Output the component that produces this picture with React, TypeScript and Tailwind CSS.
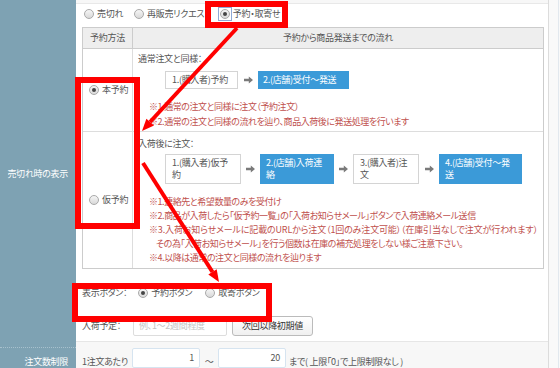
import React from 'react';

// small radio glyph, like the browser default one in the shot
const Radio = ({ checked = false, focus = false }: { checked?: boolean; focus?: boolean }) => (
  <span
    className={
      focus
        ? 'inline-flex items-center justify-center w-[12px] h-[12px] outline outline-1 outline-[#8fa9d6]'
        : 'inline-flex items-center justify-center w-[12px] h-[12px]'
    }
  >
    <span className="flex items-center justify-center w-[10px] h-[10px] rounded-full border border-[#a9a9a9] bg-gradient-to-b from-[#f6f6f6] to-[#d9d9d9]">
      {checked && <span className="w-[4px] h-[4px] rounded-full bg-[#454545]" />}
    </span>
  </span>
);

const Arrow = () => (
  <svg width="9" height="8" viewBox="0 0 9 8">
    <path d="M0 2.8h4.8V0.4L9 4 4.8 7.6V5.2H0z" fill="#7a7a7a" />
  </svg>
);

const Step = ({ blue, className, children }: { blue?: boolean; className: string; children: React.ReactNode }) => (
  <div
    className={
      blue
        ? `flex items-center shrink-0 bg-[#3b9ad8] text-white leading-[12px] whitespace-nowrap ${className}`
        : `flex items-center shrink-0 bg-white border border-[#d4d4d4] text-[#555] leading-[12px] whitespace-nowrap ${className}`
    }
  >
    <span>{children}</span>
  </div>
);

const Gap = ({ className }: { className: string }) => (
  <div className={`flex items-center justify-center shrink-0 ${className}`}>
    <Arrow />
  </div>
);

export default function App() {
  return (
    <div className="relative w-[560px] h-[368px] overflow-hidden flex bg-white font-['Noto_Sans_CJK_JP','Noto_Sans',sans-serif] text-[9px] tracking-[-0.3px] [font-feature-settings:'palt'] text-[#555]">
      {/* left label column */}
      <div className="w-[76px] shrink-0 flex flex-col bg-[#7ea2b3] text-white">
        <div className="h-[352px] flex items-center justify-end pr-[8px]">売切れ時の表示</div>
        <div className="flex-1 border-t border-dotted border-[#a8c1cd] flex justify-end pr-[8px] pt-[8px] leading-[12px]">
          注文数制限
        </div>
      </div>

      {/* form body */}
      <div className="w-[473px] shrink-0 flex flex-col border-r border-[#dcdcdc]">
        <div className="h-[5px] bg-[#f7f7f7] border-b border-[#e8e8e8]" />

        {/* sold-out display options */}
        <div className="h-[31px] flex items-start pt-[4px] pl-[7px] leading-[12px]">
          <div className="flex items-center h-[12px]">
            <Radio />
            <span className="ml-[2px]">売切れ</span>
          </div>
          <div className="flex items-center h-[12px] ml-[10px]">
            <Radio />
            <span className="ml-[2px]">再販売リクエスト</span>
          </div>
          <div className="flex items-center h-[12px] ml-[8px]">
            <Radio checked focus />
            <span className="ml-[2px]">予約・取寄せ</span>
          </div>
        </div>

        {/* reservation table */}
        <div className="ml-[6px] w-[462px] border border-[#cccccc] flex flex-col">
          <div className="h-[21px] flex bg-[#eeeeee] border-b border-[#cccccc]">
            <div className="w-[50px] border-r border-[#cccccc] flex items-center justify-center">予約方法</div>
            <div className="flex-1 flex items-center justify-center">予約から商品発送までの流れ</div>
          </div>

          <div className="h-[83px] flex border-b border-[#dddddd]">
            <div className="w-[50px] border-r border-[#dddddd] flex items-center pl-[5px]">
              <Radio checked />
              <span className="ml-[2px]">本予約</span>
            </div>
            <div className="flex-1 flex flex-col pl-[5px] pt-[4px] leading-[12px]">
              <div>通常注文と同様：</div>
              <div className="flex pl-[27px] mt-[6px]">
                <Step className="w-[73px] h-[18px] pl-[6px]">1.(購入者)予約</Step>
                <Gap className="w-[20px]" />
                <Step blue className="w-[91px] h-[18px] pl-[5px]">2.(店舗)受付～発送</Step>
              </div>
              <div className="pl-[11px] mt-[10px] leading-[15px] text-[#c0504d] whitespace-nowrap tracking-[-0.45px]">
                <div>※1.通常の注文と同様に注文（予約注文）</div>
                <div>※2.通常の注文と同様の流れを辿り、商品入荷後に発送処理を行います</div>
              </div>
            </div>
          </div>

          <div className="h-[136px] flex">
            <div className="w-[50px] border-r border-[#dddddd] flex items-center pl-[5px]">
              <Radio />
              <span className="ml-[2px]">仮予約</span>
            </div>
            <div className="flex-1 flex flex-col pl-[5px] pt-[6px] leading-[12px]">
              <div>入荷後に注文：</div>
              <div className="flex pl-[27px] mt-[4px]">
                <Step className="w-[76px] h-[30px] pl-[6px]">
                  1.(購入者)仮予
                  <br />約
                </Step>
                <Gap className="w-[19px]" />
                <Step blue className="w-[74px] h-[30px] pl-[6px]">
                  2.(店舗)入荷連
                  <br />絡
                </Step>
                <Gap className="w-[19px]" />
                <Step className="w-[66px] h-[30px] pl-[6px]">
                  3.(購入者)注
                  <br />文
                </Step>
                <Gap className="w-[20px]" />
                <Step blue className="w-[83px] h-[30px] pl-[6px]">
                  4.(店舗)受付～発
                  <br />送
                </Step>
              </div>
              <div className="pl-[11px] mt-[11px] leading-[14px] text-[#c0504d] whitespace-nowrap tracking-[-0.45px]">
                <div>※1.連絡先と希望数量のみを受付け</div>
                <div>※2.商品が入荷したら「仮予約一覧」の「入荷お知らせメール」ボタンで入荷連絡メール送信</div>
                <div className="tracking-[-0.15px]">
                  ※3.入荷お知らせメールに記載のURLから注文（1回のみ注文可能）（在庫引当なしで注文が行われます）
                </div>
                <div className="pl-[7px]">その為「入荷お知らせメール」を行う個数は在庫の補充処理をしない様ご注意下さい。</div>
                <div>※4.以降は通常の注文と同様の流れを辿ります</div>
              </div>
            </div>
          </div>
        </div>

        {/* button type */}
        <div className="mt-[18px] h-[12px] flex items-center pl-[6px] leading-[12px]">
          <span>表示ボタン：</span>
          <span className="ml-[10px] flex items-center">
            <Radio checked />
            <span className="ml-[2px]">予約ボタン</span>
          </span>
          <span className="ml-[12px] flex items-center">
            <Radio />
            <span className="ml-[2px]">取寄ボタン</span>
          </span>
        </div>

        {/* arrival estimate */}
        <div className="mt-[17px] h-[20px] flex items-center pl-[6px]">
          <span className="w-[51px]">入荷予定：</span>
          <div className="w-[94px] h-[20px] border border-[#dddddd] rounded-[2px] flex items-center pl-[5px] text-[#c4c4c4]">
            例、1～2週間程度
          </div>
          <div className="ml-[5px] w-[81px] h-[20px] border border-[#bbbbbb] rounded-[3px] bg-gradient-to-b from-white to-[#f0f0f0] flex items-center justify-center text-[#333]">
            次回以降初期値
          </div>
        </div>

        {/* order limit row */}
        <div className="mt-[5px] flex-1 bg-[#f7f7f7] border-t border-[#e6e6e6] flex items-start pl-[6px] pt-[6px]">
          <span className="w-[50px] pt-[8px] leading-[12px]">1注文あたり</span>
          <div className="w-[68px] h-[20px] bg-white border border-[#d6e4f0] rounded-[2px] flex items-center justify-end pr-[5px]">1</div>
          <span className="w-[18px] pt-[8px] leading-[12px] text-center">～</span>
          <div className="w-[68px] h-[20px] bg-white border border-[#d6e4f0] rounded-[2px] flex items-center justify-end pr-[5px]">20</div>
          <span className="ml-[3px] pt-[8px] leading-[12px] whitespace-nowrap">まで( 上限「0」で上限制限なし )</span>
        </div>
      </div>

      <div className="flex-1 bg-[#f9f9f9] flex justify-end">
        <div className="w-[2px] border-l border-[#e2e8ee]" />
      </div>

      {/* red annotation overlay */}
      <div className="absolute inset-0 pointer-events-none">
        <div className="absolute left-[205px] top-[1px] w-[83px] h-[27px] border-[6px] border-[#ff0000]" />
        <div className="absolute left-[75px] top-[77px] w-[65px] h-[152px] border-[6px] border-[#ff0000]" />
        <div className="absolute left-[72px] top-[283px] w-[200px] h-[39px] border-[6px] border-[#ff0000]" />
        <svg className="absolute inset-0" width="560" height="368" viewBox="0 0 560 368">
          <line x1="237" y1="28" x2="150" y2="122" stroke="#ff0000" strokeWidth="4" />
          <polygon points="142,131 154,125.6 146.4,118.8" fill="#ff0000" />
          <line x1="143" y1="163" x2="212.5" y2="272" stroke="#ff0000" strokeWidth="4" />
          <polygon points="219,282 208.3,274.6 216.7,269.2" fill="#ff0000" />
        </svg>
      </div>
    </div>
  );
}
